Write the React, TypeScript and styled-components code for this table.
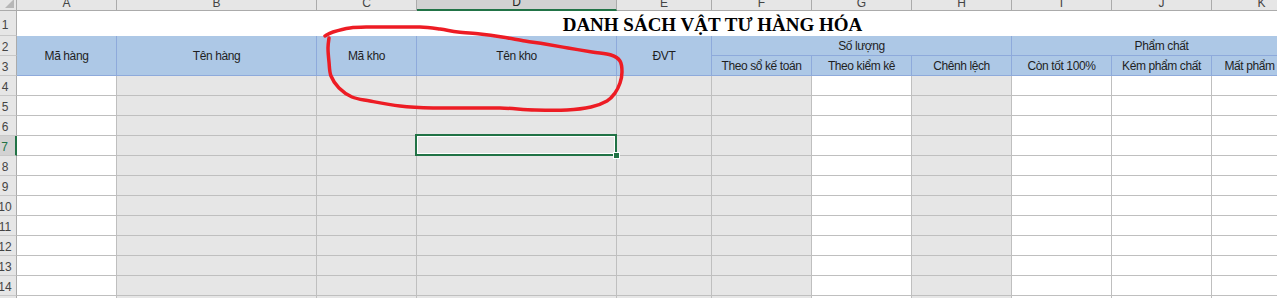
import React from "react";
import styled, { createGlobalStyle, css } from "styled-components";

const GlobalStyle = createGlobalStyle`
  html, body { margin: 0; padding: 0; background: #ffffff; }
  body { font-family: "Liberation Sans", Arial, sans-serif; }
`;

const GRID = "#bfbfbf";
const HEAD_LINE = "#ababab";
const HEAD_BG = "#e6e6e6";
const HEAD_SEL = "#d2d2d2";
const EXCEL_GREEN = "#217346";
const BLUE = "#adc8e6";
const BLUE_LINE = "#8eaadb";
const SHADE = "#e6e6e6";

const Frame = styled.div`
  position: relative;
  width: 1277px;
  height: 298px;
  overflow: hidden;
  background: #fff;
`;

const Sheet = styled.div`
  display: grid;
  grid-template-columns: 23px 100px 200px 100px 200px 95px repeat(7, 100px);
  grid-template-rows: 21px 25px repeat(14, 20px);
  margin: -10px 0 0 -6px;
  width: max-content;
`;

const Corner = styled.div`
  position: relative;
  background: ${HEAD_BG};
  border-right: 1px solid ${HEAD_LINE};
  border-bottom: 1px solid ${HEAD_LINE};
  box-sizing: border-box;
  &::after {
    content: "";
    position: absolute;
    right: 2px;
    bottom: 2px;
    border-style: solid;
    border-width: 0 0 9px 9px;
    border-color: transparent transparent #b7b7b7 transparent;
  }
`;

const ColHead = styled.div<{ $selected?: boolean }>`
  box-sizing: border-box;
  display: flex;
  align-items: center;
  justify-content: center;
  padding-top: 5px;
  font-size: 12px;
  color: #444;
  background: ${HEAD_BG};
  border-right: 1px solid ${HEAD_LINE};
  border-bottom: 1px solid ${HEAD_LINE};
  ${(p) =>
    p.$selected &&
    css`
      background: ${HEAD_SEL};
      color: #262626;
      border-bottom: 2px solid ${EXCEL_GREEN};
    `}
`;

const RowHead = styled.div<{ $selected?: boolean }>`
  box-sizing: border-box;
  display: flex;
  align-items: center;
  justify-content: center;
  padding-top: 3px;
  font-size: 12px;
  color: #444;
  background: ${HEAD_BG};
  border-right: 1px solid ${HEAD_LINE};
  border-bottom: 1px solid #c8c8c8;
  white-space: nowrap;
  ${(p) =>
    p.$selected &&
    css`
      background: ${HEAD_SEL};
      color: ${EXCEL_GREEN};
      border-right: 2px solid ${EXCEL_GREEN};
    `}
`;

const Title = styled.div`
  grid-column: 2 / 14;
  box-sizing: border-box;
  display: flex;
  align-items: center;
  justify-content: center;
  padding: 3px 4px 0 0;
  font-family: "Liberation Serif", "Times New Roman", serif;
  font-weight: bold;
  font-size: 19px;
  color: #000;
  background: #fff;
  white-space: nowrap;
`;

const HeadCell = styled.div<{ $col: string; $row: string }>`
  grid-column: ${(p) => p.$col};
  grid-row: ${(p) => p.$row};
  box-sizing: border-box;
  display: flex;
  align-items: center;
  justify-content: center;
  overflow: hidden;
  white-space: nowrap;
  font-size: 12px;
  letter-spacing: -0.4px;
  color: #1f1f1f;
  background: ${BLUE};
  border-right: 1px solid ${BLUE_LINE};
  border-bottom: 1px solid ${BLUE_LINE};
`;

const Cell = styled.div<{ $shaded?: boolean }>`
  position: relative;
  box-sizing: border-box;
  background: ${(p) => (p.$shaded ? SHADE : "#fff")};
  border-right: 1px solid ${GRID};
  border-bottom: 1px solid ${GRID};
`;

const Selection = styled.div`
  position: absolute;
  top: -2px;
  left: -2px;
  right: -1px;
  bottom: -1px;
  border: 2px solid ${EXCEL_GREEN};
  box-shadow: inset 0 0 0 1px #fff;
  z-index: 2;
  pointer-events: none;
`;

const FillHandle = styled.div`
  position: absolute;
  right: -5px;
  bottom: -5px;
  width: 5px;
  height: 5px;
  background: ${EXCEL_GREEN};
  border: 1px solid #fff;
`;

const Scribble = styled.svg`
  position: absolute;
  left: 0;
  top: 0;
  z-index: 3;
  pointer-events: none;
`;

const columns = ["A", "B", "C", "D", "E", "F", "G", "H", "I", "J", "K", "L"];
const shadedColumns = new Set(["B", "C", "D", "E", "F", "H"]);
const bodyRows = Array.from({ length: 12 }, (_, i) => i + 4);

// Freehand loop drawn around the "Mã kho" / "Tên kho" headers
const loopPoints: [number, number][] = [
  [325, 36], [333, 32], [350, 28], [370, 27], [395, 27], [420, 27], [440, 29],
  [458, 32], [480, 34], [502, 37], [525, 41], [545, 44], [568, 48], [592, 52],
  [611, 55], [620, 61], [622, 72], [620, 83], [615, 93], [607, 101], [591, 107],
  [567, 110], [535, 110], [500, 108], [467, 108], [433, 108], [400, 106],
  [370, 101], [352, 97], [339, 88], [331, 76], [329, 62], [328, 48], [329, 38],
];

function smoothPath(pts: [number, number][]): string {
  let d = `M ${pts[0][0]} ${pts[0][1]}`;
  for (let i = 0; i < pts.length - 1; i++) {
    const p0 = pts[i - 1] ?? pts[i];
    const p1 = pts[i];
    const p2 = pts[i + 1];
    const p3 = pts[i + 2] ?? p2;
    const c1x = p1[0] + (p2[0] - p0[0]) / 6;
    const c1y = p1[1] + (p2[1] - p0[1]) / 6;
    const c2x = p2[0] - (p3[0] - p1[0]) / 6;
    const c2y = p2[1] - (p3[1] - p1[1]) / 6;
    d += ` C ${c1x.toFixed(1)} ${c1y.toFixed(1)}, ${c2x.toFixed(1)} ${c2y.toFixed(1)}, ${p2[0]} ${p2[1]}`;
  }
  return d;
}

const loopPath = smoothPath(loopPoints);

export default function App() {
  return (
    <>
      <GlobalStyle />
      <Frame>
        <Sheet>
          <Corner />
          {columns.map((c) => (
            <ColHead key={c} $selected={c === "D"}>
              {c}
            </ColHead>
          ))}

          <RowHead>1</RowHead>
          <Title>DANH SÁCH VẬT TƯ HÀNG HÓA</Title>

          <RowHead style={{ gridColumn: 1, gridRow: 3 }}>2</RowHead>
          <RowHead style={{ gridColumn: 1, gridRow: 4 }}>3</RowHead>
          <HeadCell $col="2" $row="3 / 5">Mã hàng</HeadCell>
          <HeadCell $col="3" $row="3 / 5">Tên hàng</HeadCell>
          <HeadCell $col="4" $row="3 / 5">Mã kho</HeadCell>
          <HeadCell $col="5" $row="3 / 5">Tên kho</HeadCell>
          <HeadCell $col="6" $row="3 / 5">ĐVT</HeadCell>
          <HeadCell $col="7 / 10" $row="3">Số lượng</HeadCell>
          <HeadCell $col="7" $row="4">Theo sổ kế toán</HeadCell>
          <HeadCell $col="8" $row="4">Theo kiểm kê</HeadCell>
          <HeadCell $col="9" $row="4">Chênh lệch</HeadCell>
          <HeadCell $col="10 / 13" $row="3">Phẩm chất</HeadCell>
          <HeadCell $col="10" $row="4">Còn tốt 100%</HeadCell>
          <HeadCell $col="11" $row="4">Kém phẩm chất</HeadCell>
          <HeadCell $col="12" $row="4">Mất phẩm chất</HeadCell>
          <HeadCell $col="13" $row="3 / 5"></HeadCell>

          {bodyRows.map((r) => (
            <React.Fragment key={r}>
              <RowHead $selected={r === 7}>{r}</RowHead>
              {columns.map((c) => (
                <Cell key={c} $shaded={shadedColumns.has(c)}>
                  {r === 7 && c === "D" && (
                    <Selection>
                      <FillHandle />
                    </Selection>
                  )}
                </Cell>
              ))}
            </React.Fragment>
          ))}
        </Sheet>

        <Scribble width="1277" height="298" viewBox="0 0 1277 298">
          <path
            d={loopPath}
            fill="none"
            stroke="#ed1c24"
            strokeWidth="3.5"
            strokeLinecap="round"
            strokeLinejoin="round"
          />
        </Scribble>
      </Frame>
    </>
  );
}
